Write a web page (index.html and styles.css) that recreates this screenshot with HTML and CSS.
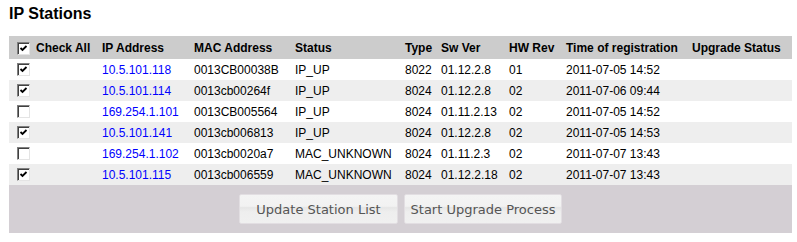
FILE: index.html
```html
<!DOCTYPE html>
<html>
<head>
  <title>IP Stations</title>
  <link rel="stylesheet" href="styles.css">
</head>
<body>
  <div class="page">
    <h1 class="title">IP Stations</h1>

    <table class="stations">
      <colgroup>
        <col class="c-check">
        <col class="c-ip">
        <col class="c-mac">
        <col class="c-status">
        <col class="c-type">
        <col class="c-sw">
        <col class="c-hw">
        <col class="c-time">
        <col class="c-upgrade">
      </colgroup>
      <thead>
        <tr>
          <th class="check-cell"><span class="check-all"><span class="box on"><svg viewBox="0 0 9 9"><path d="M1.5 4 L3.5 6 L7.5 2" /></svg></span>Check All</span></th>
          <th>IP Address</th>
          <th>MAC Address</th>
          <th>Status</th>
          <th>Type</th>
          <th>Sw Ver</th>
          <th>HW Rev</th>
          <th>Time of registration</th>
          <th>Upgrade Status</th>
        </tr>
      </thead>
      <tbody>
        <tr>
          <td class="check-cell"><span class="box on"><svg viewBox="0 0 9 9"><path d="M1.5 4 L3.5 6 L7.5 2" /></svg></span></td>
          <td><a href="#">10.5.101.118</a></td>
          <td>0013CB00038B</td>
          <td>IP_UP</td>
          <td>8022</td>
          <td>01.12.2.8</td>
          <td>01</td>
          <td>2011-07-05 14:52</td>
          <td></td>
        </tr>
        <tr>
          <td class="check-cell"><span class="box on"><svg viewBox="0 0 9 9"><path d="M1.5 4 L3.5 6 L7.5 2" /></svg></span></td>
          <td><a href="#">10.5.101.114</a></td>
          <td>0013cb00264f</td>
          <td>IP_UP</td>
          <td>8024</td>
          <td>01.12.2.8</td>
          <td>02</td>
          <td>2011-07-06 09:44</td>
          <td></td>
        </tr>
        <tr>
          <td class="check-cell"><span class="box"></span></td>
          <td><a href="#">169.254.1.101</a></td>
          <td>0013CB005564</td>
          <td>IP_UP</td>
          <td>8024</td>
          <td>01.11.2.13</td>
          <td>02</td>
          <td>2011-07-05 14:52</td>
          <td></td>
        </tr>
        <tr>
          <td class="check-cell"><span class="box on"><svg viewBox="0 0 9 9"><path d="M1.5 4 L3.5 6 L7.5 2" /></svg></span></td>
          <td><a href="#">10.5.101.141</a></td>
          <td>0013cb006813</td>
          <td>IP_UP</td>
          <td>8024</td>
          <td>01.12.2.8</td>
          <td>02</td>
          <td>2011-07-05 14:53</td>
          <td></td>
        </tr>
        <tr>
          <td class="check-cell"><span class="box"></span></td>
          <td><a href="#">169.254.1.102</a></td>
          <td>0013cb0020a7</td>
          <td>MAC_UNKNOWN</td>
          <td>8024</td>
          <td>01.11.2.3</td>
          <td>02</td>
          <td>2011-07-07 13:43</td>
          <td></td>
        </tr>
        <tr>
          <td class="check-cell"><span class="box on"><svg viewBox="0 0 9 9"><path d="M1.5 4 L3.5 6 L7.5 2" /></svg></span></td>
          <td><a href="#">10.5.101.115</a></td>
          <td>0013cb006559</td>
          <td>MAC_UNKNOWN</td>
          <td>8024</td>
          <td>01.12.2.18</td>
          <td>02</td>
          <td>2011-07-07 13:43</td>
          <td></td>
        </tr>
      </tbody>
    </table>

    <div class="actions">
      <button type="button" class="btn btn-update">Update Station List</button>
      <button type="button" class="btn btn-start">Start Upgrade Process</button>
    </div>
  </div>
</body>
</html>
```

FILE: styles.css
```css
body {
  margin: 0;
  background-color: #ffffff;
  font-family: 'Liberation Sans', Arial, sans-serif;
  font-size: 12px;
  color: #000000;
}

.page {
  padding: 4px 5px 0 9px;
  width: 783px;
}

.title {
  font-size: 16px;
  line-height: 19px;
  font-weight: bold;
  margin: 0 0 13px 0;
}

.stations {
  width: 783px;
  table-layout: fixed;
  border-collapse: collapse;
  border-spacing: 0;
}

.c-check { width: 89px; }
.c-ip { width: 92px; }
.c-mac { width: 101px; }
.c-status { width: 110px; }
.c-type { width: 36px; }
.c-sw { width: 68px; }
.c-hw { width: 57px; }
.c-time { width: 126px; }
.c-upgrade { width: 104px; }

.stations th,
.stations td {
  padding: 0 0 0 4px;
  text-align: left;
  vertical-align: middle;
  white-space: nowrap;
}

.stations th {
  background-color: #cccccc;
  height: 23px;
  font-weight: bold;
}

.stations td {
  height: 21px;
}

.stations tbody tr:nth-child(even) td {
  background-color: #eeeeee;
}

.stations .check-cell {
  padding-left: 8px;
}

.stations a {
  color: #0000ff;
  text-decoration: none;
}

.check-all {
  display: flex;
  align-items: center;
  gap: 6px;
  padding-top: 1px;
}

/* classic inset checkbox */
.box {
  display: block;
  box-sizing: border-box;
  width: 13px;
  height: 13px;
  background-color: #ffffff;
  border-top: 1px solid #808080;
  border-left: 1px solid #808080;
  border-right: 1px solid #e4e4e4;
  border-bottom: 1px solid #e4e4e4;
  box-shadow: inset 1px 1px 0 #404040;
  position: relative;
}

.box svg {
  position: absolute;
  left: 1px;
  top: 1px;
  width: 9px;
  height: 9px;
}

.box svg path {
  fill: none;
  stroke: #000000;
  stroke-width: 1.8;
}

.actions {
  background-color: #d4cfd4;
  height: 48px;
  display: flex;
  justify-content: center;
  align-items: flex-start;
  gap: 6px;
  padding-top: 9px;
  box-sizing: border-box;
}

.btn {
  height: 30px;
  padding: 0;
  border: 1px solid #e2dee2;
  border-radius: 2px;
  background: linear-gradient(#f4f4f4 0%, #f2f2f2 40%, #e6e6e6 45%, #eeeeee 60%, #f0f0f0 100%);
  font-family: 'DejaVu Sans', Verdana, sans-serif;
  font-size: 13px;
  color: #555555;
}

.btn-update { width: 159px; }
.btn-start { width: 158px; }
```
